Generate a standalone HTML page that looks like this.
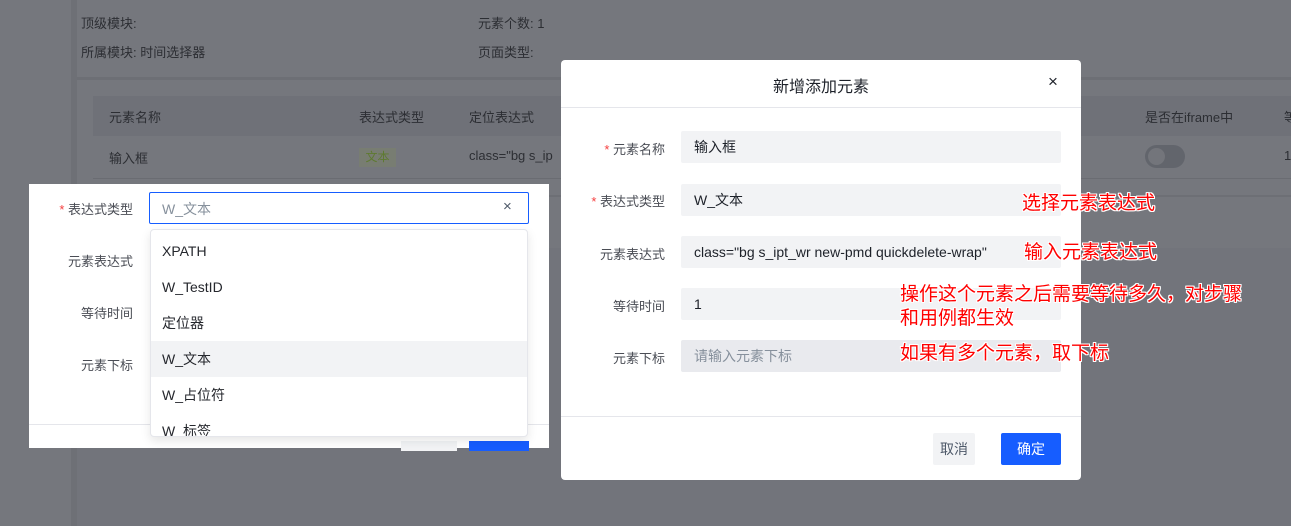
<!DOCTYPE html>
<html><head><meta charset="utf-8"><style>
*{box-sizing:border-box;margin:0;padding:0}
body{width:1291px;height:526px;overflow:hidden;background:#72747b;font-family:"Liberation Sans","Noto Sans CJK SC",sans-serif;font-size:14px;color:#25272d;position:relative}
.a{position:absolute}
.t{position:absolute;white-space:nowrap}
.bg{color:#2c2e33}
.red{color:#f00;font-size:19px;text-shadow:1px 0 #fff,-1px 0 #fff,0 1px #fff,0 -1px #fff,1px 1px #fff,-1px -1px #fff,1px -1px #fff,-1px 1px #fff;line-height:24px}
.lbl{position:absolute;text-align:right;color:#4a4d55;font-size:13px;white-space:nowrap}
.inp{position:absolute;background:#f2f3f5;border-radius:2px;height:32px;line-height:32px;padding-left:13px;font-size:14px;color:#1d2129;white-space:nowrap}
.star{color:#f53f3f}
</style></head><body>
<div class="a" style="left:0;top:0;width:71px;height:526px;background:#75777d"></div>
<div class="a" style="left:71px;top:0;width:6px;height:526px;background:#6e7076"></div>
<div class="a" style="left:77px;top:0;width:1214px;height:77px;background:#75777d"></div>
<div class="a" style="left:77px;top:77px;width:1214px;height:3px;background:#6d6f75"></div>
<div class="a" style="left:77px;top:80px;width:1214px;height:168px;background:#75777d"></div>
<div class="a" style="left:93px;top:96px;width:1198px;height:40px;background:#6f7178"></div>
<div class="a" style="left:93px;top:178px;width:1198px;height:1px;background:#6a6c72"></div>
<div class="a" style="left:77px;top:195px;width:1214px;height:2px;background:#6d6f75"></div>
<div class="t bg" style="left:81px;top:13px;font-size:13px">顶级模块:</div>
<div class="t bg" style="left:478px;top:13px;font-size:13px">元素个数: 1</div>
<div class="t bg" style="left:81px;top:42px;font-size:13px">所属模块: 时间选择器</div>
<div class="t bg" style="left:478px;top:42px;font-size:13px">页面类型:</div>
<div class="t bg" style="left:109px;top:107px;font-size:13px">元素名称</div>
<div class="t bg" style="left:359px;top:107px;font-size:13px">表达式类型</div>
<div class="t bg" style="left:469px;top:107px;font-size:13px">定位表达式</div>
<div class="t bg" style="left:1145px;top:107px;font-size:13px">是否在iframe中</div>
<div class="t bg" style="left:1284px;top:107px;font-size:13px">等</div>
<div class="t bg" style="left:109px;top:148px;font-size:13px">输入框</div>
<div class="a" style="left:359px;top:148px;width:37px;height:19px;background:#787d72;color:#5e7a30;font-size:12px;line-height:19px;text-align:center">文本</div>
<div class="t bg" style="left:469px;top:148px;font-size:13px">class="bg s_ip</div>
<div class="a" style="left:1145px;top:145px;width:40px;height:23px;border-radius:12px;background:#62656c"></div>
<div class="a" style="left:1148px;top:148px;width:17px;height:17px;border-radius:50%;background:#73757b"></div>
<div class="t bg" style="left:1284px;top:148px;font-size:13px">1</div>

<!-- left popup -->
<div class="a" style="left:29px;top:184px;width:520px;height:264px;background:#fff"></div>
<div class="a" style="left:29px;top:424px;width:520px;height:1px;background:#e5e6eb"></div>
<div class="a" style="left:401px;top:441px;width:56px;height:10px;background:#f2f3f5"></div>
<div class="a" style="left:469px;top:441px;width:60px;height:10px;background:#165dff"></div>
<div class="lbl" style="left:40px;top:199px;width:93px"><span class="star">* </span>表达式类型</div>
<div class="lbl" style="left:40px;top:251px;width:93px">元素表达式</div>
<div class="lbl" style="left:40px;top:303px;width:93px">等待时间</div>
<div class="lbl" style="left:40px;top:355px;width:93px">元素下标</div>
<div class="a" style="left:149px;top:192px;width:380px;height:32px;border:1px solid #165dff;border-radius:2px;background:#fff"></div>
<div class="t" style="left:162px;top:199px;color:#86909c">W_文本</div>
<div class="t" style="left:503px;top:198px;color:#4e5969;font-size:15px">×</div>
<div class="a" style="left:150px;top:229px;width:378px;height:208px;background:#fff;border:1px solid #e5e6eb;border-radius:4px;box-shadow:0 4px 10px rgba(0,0,0,.1);overflow:hidden">
 <div style="height:3px"></div>
 <div style="height:36px;line-height:36px;padding-left:11px">XPATH</div>
 <div style="height:36px;line-height:36px;padding-left:11px">W_TestID</div>
 <div style="height:36px;line-height:36px;padding-left:11px">定位器</div>
 <div style="height:36px;line-height:36px;padding-left:11px;background:#f2f3f5">W_文本</div>
 <div style="height:36px;line-height:36px;padding-left:11px">W_占位符</div>
 <div style="height:36px;line-height:36px;padding-left:11px">W_标签</div>
</div>

<!-- modal -->
<div class="a" style="left:561px;top:60px;width:520px;height:420px;background:#fff;border-radius:4px"></div>
<div class="a" style="left:561px;top:107px;width:520px;height:1px;background:#e5e6eb"></div>
<div class="t" style="left:561px;top:73px;width:520px;text-align:center;font-size:16px;color:#1d2129">新增添加元素</div>
<div class="t" style="left:1048px;top:72px;font-size:17px;color:#1d2129">×</div>
<div class="lbl" style="left:565px;top:139px;width:100px"><span class="star">* </span>元素名称</div>
<div class="lbl" style="left:565px;top:191px;width:100px"><span class="star">* </span>表达式类型</div>
<div class="lbl" style="left:565px;top:244px;width:100px">元素表达式</div>
<div class="lbl" style="left:565px;top:296px;width:100px">等待时间</div>
<div class="lbl" style="left:565px;top:348px;width:100px">元素下标</div>
<div class="inp" style="left:681px;top:131px;width:380px">输入框</div>
<div class="inp" style="left:681px;top:184px;width:380px">W_文本</div>
<div class="inp" style="left:681px;top:236px;width:380px">class="bg s_ipt_wr new-pmd quickdelete-wrap"</div>
<div class="inp" style="left:681px;top:288px;width:380px">1</div>
<div class="inp" style="left:681px;top:340px;width:380px;background:#e9eaee;color:#86909c">请输入元素下标</div>
<div class="a" style="left:561px;top:416px;width:520px;height:1px;background:#e5e6eb"></div>
<div class="a" style="left:933px;top:433px;width:42px;height:32px;background:#f2f3f5;border-radius:2px;line-height:32px;text-align:center;color:#4e5969">取消</div>
<div class="a" style="left:1001px;top:433px;width:60px;height:32px;background:#165dff;border-radius:2px;line-height:32px;text-align:center;color:#fff">确定</div>

<div class="t red" style="left:1022px;top:192px">选择元素表达式</div>
<div class="t red" style="left:1024px;top:241px">输入元素表达式</div>
<div class="t red" style="left:900px;top:283px">操作这个元素之后需要等待多久，对步骤<br>和用例都生效</div>
<div class="t red" style="left:900px;top:342px">如果有多个元素，取下标</div>
</body></html>
